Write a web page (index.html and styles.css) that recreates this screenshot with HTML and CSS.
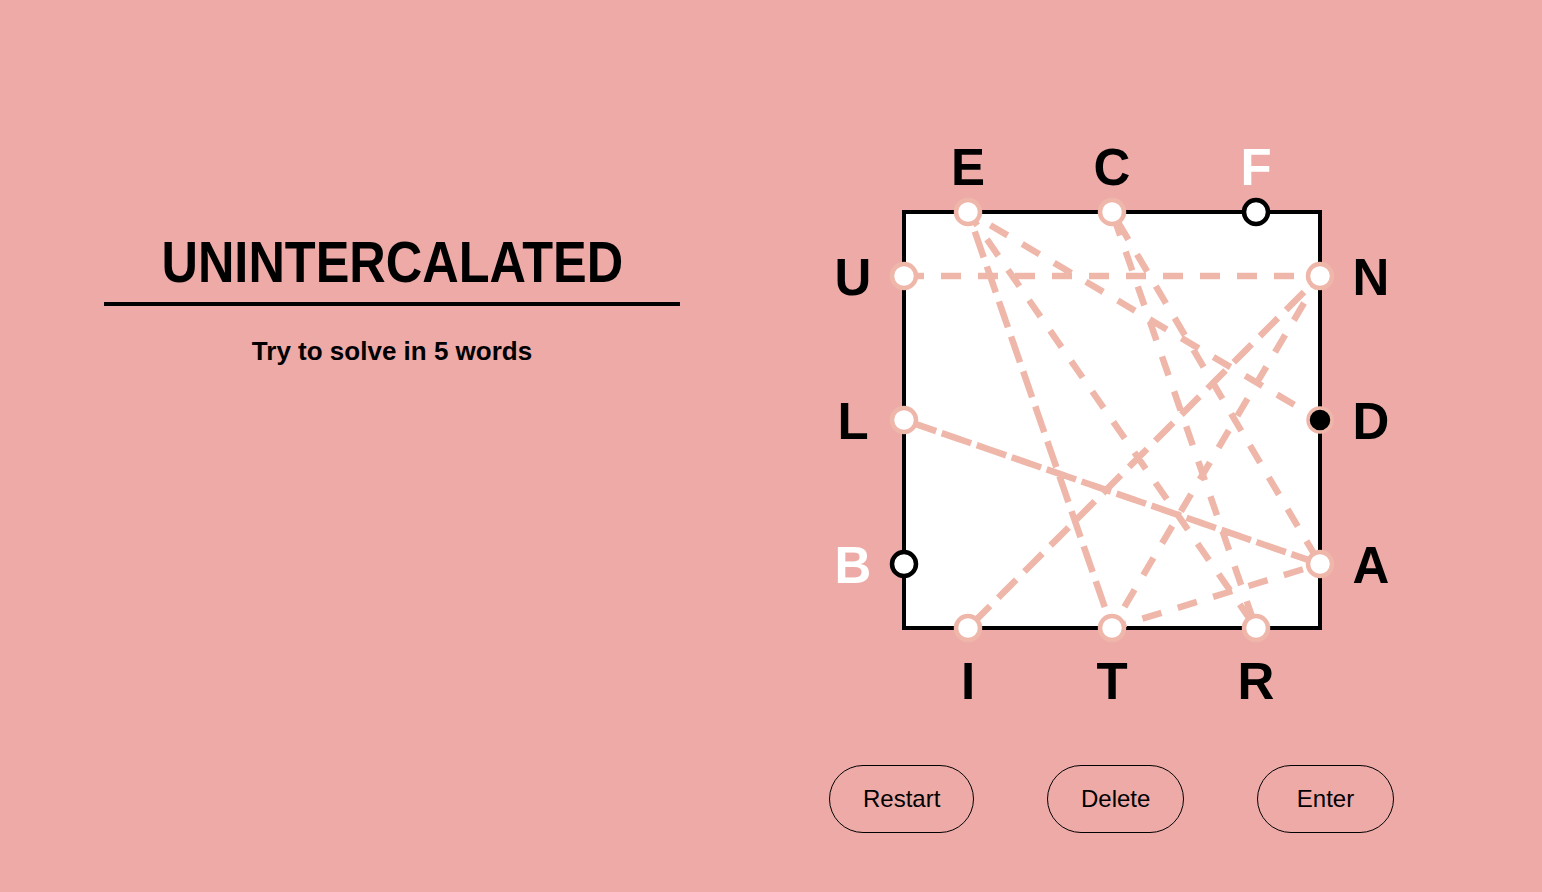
FILE: index.html
```html
<!DOCTYPE html>
<html lang="en">
<head>
<meta charset="utf-8">
<title>Letter Boxed</title>
<link rel="stylesheet" href="styles.css">
</head>
<body>
<main class="game">
  <section class="info">
    <h1 class="word"><span class="word-text">UNINTERCALATED</span></h1>
    <p class="hint">Try to solve in 5 words</p>
  </section>
  <section class="board">
    <svg class="box" width="600" height="600" viewBox="0 0 600 600">
      <rect class="frame" x="92" y="92" width="416" height="416"/>
      <path class="trail" d="M92 156 L508 156 L156 508 L508 156 L300 508 L156 92 L444 508 L300 92 L508 444 L92 300 L508 444 L300 508 L156 92 L508 300"/>
      <g class="nodes">
        <circle class="node used" cx="156" cy="92" r="12"/>
        <circle class="node used" cx="300" cy="92" r="12"/>
        <circle class="node free" cx="444" cy="92" r="12"/>
        <circle class="node used" cx="92" cy="156" r="12"/>
        <circle class="node used" cx="92" cy="300" r="12"/>
        <circle class="node free" cx="92" cy="444" r="12"/>
        <circle class="node used" cx="508" cy="156" r="12"/>
        <circle class="node current" cx="508" cy="300" r="12"/>
        <circle class="node used" cx="508" cy="444" r="12"/>
        <circle class="node used" cx="156" cy="508" r="12"/>
        <circle class="node used" cx="300" cy="508" r="12"/>
        <circle class="node used" cx="444" cy="508" r="12"/>
      </g>
      <g class="letters">
        <text x="156" y="65">E</text>
        <text x="300" y="65">C</text>
        <text class="unused" x="444" y="65">F</text>
        <text x="41" y="175">U</text>
        <text x="41" y="319">L</text>
        <text class="unused" x="41" y="463">B</text>
        <text x="559" y="175">N</text>
        <text x="559" y="319">D</text>
        <text x="559" y="463">A</text>
        <text x="156" y="579">I</text>
        <text x="300" y="579">T</text>
        <text x="444" y="579">R</text>
      </g>
    </svg>
    <div class="controls">
      <button class="btn" type="button">Restart</button>
      <button class="btn" type="button">Delete</button>
      <button class="btn" type="button">Enter</button>
    </div>
  </section>
</main>
</body>
</html>
```
FILE: styles.css
```css
html, body {
  margin: 0;
  padding: 0;
}
body {
  background: #eeaaa7;
  font-family: "Liberation Sans", Arial, sans-serif;
  color: #000;
  width: 1542px;
  height: 892px;
  overflow: hidden;
}
.game {
  display: flex;
  padding-left: 104px;
}
.info {
  width: 576px;
  padding-top: 232px;
  text-align: center;
}
.word {
  margin: 0;
  font-family: "Liberation Sans", Arial, sans-serif;
  font-weight: 700;
  font-size: 58px;
  line-height: 60px;
  padding-bottom: 10px;
  border-bottom: 4px solid #000;
}
.word-text {
  display: inline-block;
  transform: scaleX(0.87);
  transform-origin: center;
}
.hint {
  margin: 30px 0 0;
  font-weight: 700;
  font-size: 26px;
  line-height: 30px;
}
.board {
  margin-left: 132px;
  padding-top: 120px;
  width: 600px;
}
.box {
  display: block;
}
.frame {
  fill: #fff;
  stroke: #000;
  stroke-width: 4;
}
.trail {
  fill: none;
  stroke: #efb7aa;
  stroke-width: 6.5;
  stroke-dasharray: 20 17;
  stroke-linejoin: miter;
}
.node {
  fill: #fff;
  stroke-width: 4.5;
}
.node.used {
  stroke: #efb7aa;
}
.node.free {
  stroke: #000;
}
.node.current {
  fill: #000;
  stroke: #efb7aa;
  stroke-width: 3.5;
}
.letters text {
  font-family: "Liberation Sans", Arial, sans-serif;
  font-weight: 700;
  font-size: 51px;
  text-anchor: middle;
  fill: #000;
}
.letters text.unused {
  fill: #fff;
}
.controls {
  display: flex;
  justify-content: space-between;
  padding: 45px 18px 0 17px;
}
.btn {
  height: 68px;
  min-width: 137px;
  padding: 0 33px;
  border: 1px solid #000;
  border-radius: 34px;
  background: transparent;
  font-family: "Liberation Sans", Arial, sans-serif;
  font-size: 24px;
  color: #000;
  cursor: pointer;
}
```
